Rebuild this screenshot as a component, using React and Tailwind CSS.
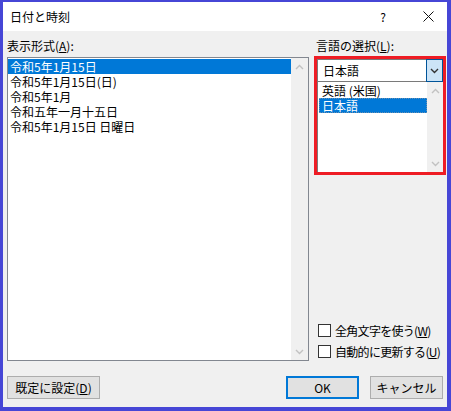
import React from "react";

const font = { fontFamily: '"Noto Sans CJK JP", "Noto Sans", sans-serif' };

function ChevUp({ color = "#c2c2c2" }) {
  return (
    <svg width="9" height="6" viewBox="0 0 9 6">
      <path d="M1 5 L4.5 1.5 L8 5" fill="none" stroke={color} strokeWidth="1.4" />
    </svg>
  );
}
function ChevDown({ color = "#c2c2c2" }) {
  return (
    <svg width="9" height="6" viewBox="0 0 9 6">
      <path d="M1 1 L4.5 4.5 L8 1" fill="none" stroke={color} strokeWidth="1.4" />
    </svg>
  );
}

function Scrollbar({ className }) {
  return (
    <div className={"flex flex-col justify-between bg-[#f0f0f0] " + className}>
      <div className="h-[17px] flex items-center justify-center"><ChevUp /></div>
      <div className="h-[17px] flex items-center justify-center"><ChevDown /></div>
    </div>
  );
}

function Checkbox({ label, k }) {
  return (
    <div className="flex items-center h-[15px] text-[12px] leading-[15px] text-black whitespace-nowrap">
      <div className="shrink-0 w-[13px] h-[13px] border border-[#333333] bg-white mr-[4px]" />
      <span className="whitespace-nowrap tracking-[-0.7px]">{label}(<span className="underline">{k}</span>)</span>
    </div>
  );
}

export default function App() {
  const formats = [
    "令和5年1月15日",
    "令和5年1月15日(日)",
    "令和5年1月",
    "令和五年一月十五日",
    "令和5年1月15日 日曜日",
  ];
  return (
    <div
      style={font}
      className="w-[451px] h-[411px] border-solid border-[#4646d6] border-t-2 border-l-[3px] border-r-4 border-b-4 flex flex-col bg-[#f0f0f0] text-black"
    >
      {/* Title bar */}
      <div className="h-[29px] bg-white flex items-center text-[12px] leading-[15px]">
        <span className="pl-[7px] flex-1">日付と時刻</span>
        <span className="w-[20px] text-center mr-[25px]">?</span>
        <span className="w-[20px] flex justify-center mr-[9px]">
          <svg width="11" height="11" viewBox="0 0 11 11">
            <path d="M0.5 0.5 L10.5 10.5 M10.5 0.5 L0.5 10.5" stroke="#111" strokeWidth="1" />
          </svg>
        </span>
      </div>

      {/* Body */}
      <div className="flex-1 flex flex-col pl-[4px] pr-[1px] pt-[7px] pb-[8px] text-[12px] leading-[15px]">
        <div className="flex">
          {/* Left column */}
          <div className="w-[302px] flex flex-col">
            <div className="h-[15px]">表示形式(<span className="underline">A</span>):</div>
            <div className="mt-[4px] h-[304px] border border-[#828790] bg-white flex">
              <div className="flex-1 pt-[1px]">
                {formats.map((f, i) => (
                  <div
                    key={i}
                    className={
                      "h-[15px] pl-[2px] whitespace-nowrap " +
                      (i === 0 ? "bg-[#0078d7] text-white" : "")
                    }
                  >
                    {f}
                  </div>
                ))}
              </div>
              <Scrollbar className="w-[17px]" />
            </div>
          </div>

          {/* Right column */}
          <div className="ml-[5px] w-[132px] flex flex-col">
            <div className="h-[15px] pl-[2px]">言語の選択(<span className="underline">L</span>):</div>
            <div className="mt-[3px] h-[119px] border-[3px] border-[#ee1c24] flex flex-col">
              {/* combo */}
              <div className="h-[23px] flex bg-white border-l border-t border-b border-[#7a7a7a]">
                <div className="flex-1 pl-[5px] flex items-center">日本語</div>
                <div className="w-[17px] h-[23px] -mt-px -mb-px bg-[#cce4f7] border border-[#005499] flex items-center justify-center">
                  <ChevDown color="#333" />
                </div>
              </div>
              {/* list */}
              <div className="flex-1 flex bg-white border-l border-[#7a7a7a]">
                <div className="flex-1 pt-[1px] pl-[1px]">
                  <div className="h-[15px] pl-[3px] whitespace-nowrap">英語 (米国)</div>
                  <div className="h-[15px] pl-[2px] bg-[#0078d7] text-white border border-dotted border-[#6a8fb0] leading-[13px] whitespace-nowrap">
                    日本語
                  </div>
                </div>
                <Scrollbar className="w-[16px]" />
              </div>
            </div>
            <div className="flex-1" />
            <div className="flex flex-col gap-[6px] pl-[4px] mb-[2px]">
              <Checkbox label="全角文字を使う" k="W" />
              <Checkbox label="自動的に更新する" k="U" />
            </div>
          </div>
        </div>

        {/* Buttons */}
        <div className="mt-[15px] flex items-center">
          <button className="w-[93px] h-[23px] bg-[#e1e1e1] border border-[#adadad] text-[12px] leading-[15px]">
            既定に設定(<span className="underline">D</span>)
          </button>
          <div className="flex-1" />
          <button className="w-[73px] h-[23px] bg-[#e1e1e1] border-2 border-[#0078d7] text-[12px] leading-[15px]">
            OK
          </button>
          <button className="ml-[11px] mr-[3px] w-[73px] h-[23px] bg-[#e1e1e1] border border-[#adadad] text-[12px] leading-[15px]">
            キャンセル
          </button>
        </div>
      </div>
    </div>
  );
}
